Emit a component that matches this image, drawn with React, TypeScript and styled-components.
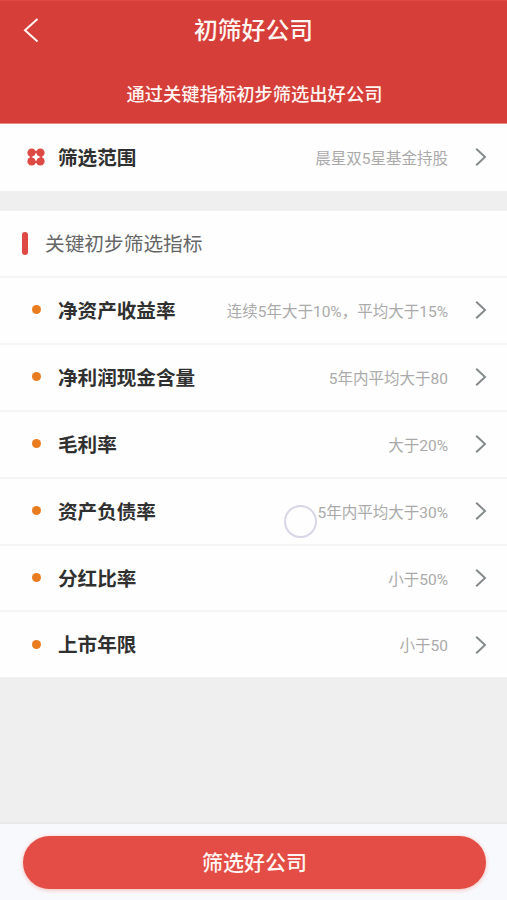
import React from 'react';
import styled, { createGlobalStyle } from 'styled-components';

const GlobalStyle = createGlobalStyle`
  * { box-sizing: border-box; }
  body {
    margin: 0;
    background: #efefef;
    font-family: Roboto, "Noto Sans CJK SC", sans-serif;
  }
`;

const Page = styled.div`
  display: flex;
  flex-direction: column;
  width: 100%;
  height: 900px;
  background: #efefef;
  overflow: hidden;
`;

const Header = styled.header`
  flex: none;
  height: 124px;
  background: #d63e39;
  border-top: 1px solid #e04843;
  border-bottom: 1px solid #e58a86;
  color: #fff5f2;
`;

const TitleBar = styled.div`
  display: grid;
  grid-template-columns: 60px 1fr 60px;
  align-items: center;
  height: 60px;
`;

const BackButton = styled.button`
  display: flex;
  padding: 0 0 2px 22px;
  border: 0;
  background: none;
  color: inherit;
`;

const Title = styled.h1`
  margin: 0;
  text-align: center;
  font-size: 23.8px;
  line-height: 36px;
  font-weight: 500;
`;

const Subtitle = styled.p`
  margin: 20px 0 0;
  padding-left: 2px;
  text-align: center;
  font-size: 18.3px;
  line-height: 28px;
  font-weight: 500;
`;

const Panel = styled.section`
  flex: none;
  background: #fefefe;
  & + & { margin-top: 20px; }
`;

const Row = styled.div<{ $height?: number; $divided?: boolean }>`
  display: grid;
  grid-template-columns: 58px auto 1fr 59px;
  align-items: center;
  height: ${(p) => p.$height ?? 66.9}px;
  border-top: ${(p) => (p.$divided ? '2px solid #f5f5f5' : '0')};
`;

const Marker = styled.div`
  display: flex;
  padding-left: 27px;
`;

const Dot = styled.span`
  width: 9px;
  height: 9px;
  margin: 0 0 1px 5px;
  border-radius: 50%;
  background: #ea7c20;
`;

const Label = styled.span`
  padding-top: 3px;
  font-size: 19.6px;
  line-height: 30px;
  font-weight: 700;
  color: #303030;
`;

const Value = styled.span`
  padding-top: 3px;
  text-align: right;
  font-size: 15.5px;
  line-height: 24px;
  color: #aaa;
  white-space: nowrap;
`;

const Arrow = styled.div`
  display: flex;
  padding-left: 26px;
  color: #858b8d;
`;

const SectionHead = styled.div`
  display: flex;
  align-items: center;
  height: 65.5px;
  padding-left: 22px;
`;

const Accent = styled.span`
  width: 6px;
  height: 23px;
  margin-right: 17px;
  border-radius: 3px;
  background: #de4a43;
`;

const SectionTitle = styled.h2`
  margin: 4px 0 0;
  font-size: 19.7px;
  line-height: 30px;
  font-weight: 400;
  color: #666;
`;

const Footer = styled.footer`
  flex: none;
  height: 78px;
  margin-top: auto;
  padding: 12px 21px 0 23px;
  border-top: 2px solid #e8eaec;
  background: #f8f9fd;
`;

const SubmitButton = styled.button`
  display: block;
  width: 100%;
  height: 53px;
  padding: 2px 0 0;
  border: 0;
  border-radius: 27px;
  background: #e34d45;
  box-shadow: 0 1px 4px #f5b9b5;
  color: #fff5f2;
  font: 500 21px/51px Roboto, "Noto Sans CJK SC", sans-serif;
`;

const TouchRing = styled.span`
  position: absolute;
  left: 284px;
  top: 505px;
  width: 33px;
  height: 33px;
  border: 2px solid #d9d6e8;
  border-radius: 50%;
`;

const Chevron = () => (
  <Arrow>
    <svg width="14" height="20" viewBox="0 0 14 20" fill="none" stroke="currentColor" strokeWidth="2">
      <path d="M2.2 1.8 11 10l-8.8 8.2" />
    </svg>
  </Arrow>
);

const ScopeIcon = () => (
  <svg width="18" height="18" viewBox="0 0 18 18">
    <rect x="3" y="3" width="12" height="12" fill="#dd4a43" />
    <g fill="#dd4a43">
      <circle cx="4.7" cy="4.7" r="4.3" />
      <circle cx="13.3" cy="4.7" r="4.3" />
      <circle cx="4.7" cy="13.3" r="4.3" />
      <circle cx="13.3" cy="13.3" r="4.3" />
    </g>
    <path d="M9 4.4 10.5 7.5 13.6 9 10.5 10.5 9 13.6 7.5 10.5 4.4 9 7.5 7.5Z" fill="#fff" />
  </svg>
);

const indicators = [
  { label: '净资产收益率', value: '连续5年大于10%，平均大于15%' },
  { label: '净利润现金含量', value: '5年内平均大于80' },
  { label: '毛利率', value: '大于20%' },
  { label: '资产负债率', value: '5年内平均大于30%' },
  { label: '分红比率', value: '小于50%' },
  { label: '上市年限', value: '小于50' },
];

export default function App() {
  return (
    <>
      <GlobalStyle />
      <Page lang="zh-CN">
        <Header>
          <TitleBar>
            <BackButton aria-label="返回">
              <svg width="18" height="26" viewBox="0 0 18 26" fill="none" stroke="currentColor" strokeWidth="2">
                <path d="M15.5 2 3 13.2 15.5 24.5" />
              </svg>
            </BackButton>
            <Title>初筛好公司</Title>
          </TitleBar>
          <Subtitle>通过关键指标初步筛选出好公司</Subtitle>
        </Header>
        <Panel>
          <Row $height={66.5}>
            <Marker><ScopeIcon /></Marker>
            <Label>筛选范围</Label>
            <Value>晨星双5星基金持股</Value>
            <Chevron />
          </Row>
        </Panel>
        <Panel>
          <SectionHead>
            <Accent />
            <SectionTitle>关键初步筛选指标</SectionTitle>
          </SectionHead>
          {indicators.map((item) => (
            <Row key={item.label} $divided>
              <Marker><Dot /></Marker>
              <Label>{item.label}</Label>
              <Value>{item.value}</Value>
              <Chevron />
            </Row>
          ))}
        </Panel>
        <Footer>
          <SubmitButton>筛选好公司</SubmitButton>
        </Footer>
        <TouchRing />
      </Page>
    </>
  );
}
